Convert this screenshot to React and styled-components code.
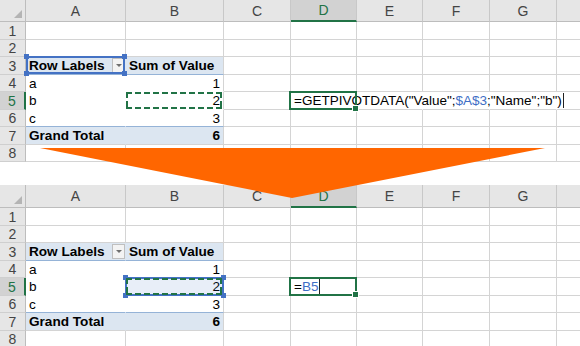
import React from 'react';
import styled, { createGlobalStyle } from 'styled-components';

const GlobalStyle = createGlobalStyle`
  html, body { margin: 0; padding: 0; background: #ffffff; }
  body {
    font-family: "Liberation Sans", Arial, sans-serif;
    width: 580px;
    height: 346px;
    overflow: hidden;
  }
`;

const GREEN = '#217346';
const REF_BLUE = '#4472c4';
const PIVOT_BG = '#dce6f1';
const PIVOT_LINE = '#95b3d7';
const GRID = '#d4d4d4';

const COLS = ['A', 'B', 'C', 'D', 'E', 'F', 'G', 'H'];
const ROWS = [1, 2, 3, 4, 5, 6, 7, 8];

const Page = styled.div`
  position: relative;
  width: 580px;
  height: 346px;
  overflow: hidden;
  display: flex;
  flex-direction: column;
  gap: 23px;
  background: #ffffff;
`;

const Sheet = styled.div`
  flex: none;
  width: 580px;
  height: ${(p) => p.$height}px;
  overflow: hidden;
  display: grid;
  grid-template-columns: 26px 100px 98px 67px 66px 66px 67px 67px 67px;
  grid-template-rows: ${(p) => p.$headerH}px 18px 17px 18px 17px 18px 17px 18px 17px;
`;

const ColHead = styled.div`
  box-sizing: border-box;
  display: flex;
  align-items: center;
  justify-content: center;
  font-size: 14px;
  color: ${(p) => (p.$sel ? GREEN : '#444444')};
  background: ${(p) => (p.$sel ? '#d2d2d2' : '#e6e6e6')};
  border-right: 1px solid #c8c8c8;
  border-bottom: ${(p) => (p.$sel ? `2px solid ${GREEN}` : '1px solid #bdbdbd')};
`;

const Corner = styled(ColHead)`
  align-items: flex-end;
  justify-content: flex-end;
  padding: 0 3px 3px 0;
  border-right: 1px solid #bdbdbd;
`;

const CornerTri = styled.div`
  width: 0;
  height: 0;
  border-left: 8px solid transparent;
  border-bottom: 8px solid #b4b4b4;
`;

const RowHead = styled.div`
  box-sizing: border-box;
  display: flex;
  align-items: center;
  justify-content: center;
  font-size: 14px;
  color: ${(p) => (p.$sel ? GREEN : '#444444')};
  background: ${(p) => (p.$sel ? '#d2d2d2' : '#e6e6e6')};
  border-right: ${(p) => (p.$sel ? `2px solid ${GREEN}` : '1px solid #bdbdbd')};
  border-bottom: 1px solid #cfcfcf;
`;

const Cell = styled.div`
  position: relative;
  box-sizing: border-box;
  display: flex;
  align-items: center;
  justify-content: ${(p) => (p.$right ? 'flex-end' : 'flex-start')};
  padding: 0 ${(p) => (p.$tight ? 0 : 3)}px 0 3px;
  font-size: 13.6px;
  font-weight: ${(p) => (p.$bold ? 700 : 400)};
  color: #000000;
  white-space: nowrap;
  background: ${(p) => p.$bg || 'transparent'};
  border-right: 1px solid ${(p) => p.$rc || GRID};
  border-bottom: 1px solid ${(p) => p.$bc || GRID};
`;

const Label = styled.span`
  flex: 1 0 auto;
`;

const DropBtn = styled.span`
  box-sizing: border-box;
  flex: none;
  width: 13px;
  height: 15px;
  display: flex;
  align-items: center;
  justify-content: center;
  background: #f3f3f3;
  border: 1px solid #bfbfbf;
`;

const DropArrow = styled.span`
  width: 0;
  height: 0;
  border-left: 3px solid transparent;
  border-right: 3px solid transparent;
  border-top: 3px solid #6f6f6f;
`;

const Typed = styled.span`
  position: relative;
  z-index: 6;
  flex: none;
  display: inline-flex;
  align-items: center;
  white-space: nowrap;
  font-size: 13.5px;
`;

const Ref = styled.span`
  color: #3f6fc6;
`;

const Caret = styled.span`
  display: inline-block;
  width: 1px;
  height: 15px;
  margin-left: 1px;
  background: #222222;
`;

const RangeBox = styled.div`
  position: absolute;
  inset: ${(p) => p.$inset};
  box-sizing: border-box;
  border: 2px solid ${REF_BLUE};
  background: ${(p) => (p.$fill ? 'rgba(68, 114, 196, 0.12)' : 'transparent')};
  pointer-events: none;
  z-index: 4;
`;

const Handle = styled.span`
  position: absolute;
  width: 5px;
  height: 5px;
  background: ${REF_BLUE};
  ${(p) => (p.$top ? 'top: -4px;' : 'bottom: -4px;')}
  ${(p) => (p.$left ? 'left: -4px;' : 'right: -4px;')}
`;

const dash = (dir) =>
  `repeating-linear-gradient(${dir}, ${GREEN} 0 6px, transparent 6px 9px)`;

const Ants = styled.div`
  position: absolute;
  inset: ${(p) => p.$inset};
  pointer-events: none;
  z-index: 5;
  background:
    ${dash('90deg')} top left / 100% 2px no-repeat,
    ${dash('90deg')} bottom left / 100% 2px no-repeat,
    ${dash('180deg')} top left / 2px 100% no-repeat,
    ${dash('180deg')} top right / 2px 100% no-repeat;
`;

const ActiveBox = styled.div`
  position: absolute;
  inset: -1px -1px -1px -2px;
  box-sizing: border-box;
  border: 2px solid ${GREEN};
  pointer-events: none;
  z-index: 7;
`;

const FillHandle = styled.span`
  position: absolute;
  right: -4px;
  bottom: -4px;
  width: 5px;
  height: 5px;
  background: ${GREEN};
  border: 1px solid #ffffff;
`;

const Arrow = styled.svg`
  position: absolute;
  left: 40px;
  top: 148px;
  z-index: 20;
  pointer-events: none;
`;

function Handles() {
  return (
    <>
      <Handle $top $left />
      <Handle $top />
      <Handle $left />
      <Handle />
    </>
  );
}

const pivotCells = {
  A3: {
    bold: true, bg: PIVOT_BG, rc: PIVOT_BG, bc: PIVOT_LINE, tight: true,
    content: (
      <>
        <Label>Row Labels</Label>
        <DropBtn><DropArrow /></DropBtn>
      </>
    ),
  },
  B3: { bold: true, bg: PIVOT_BG, bc: PIVOT_LINE, content: 'Sum of Value' },
  A4: { rc: '#ffffff', bc: '#ffffff', content: 'a' },
  B4: { right: true, bc: '#ffffff', content: '1' },
  A5: { rc: '#ffffff', bc: '#ffffff', content: 'b' },
  B5: { right: true, bc: '#ffffff', content: '2' },
  A6: { rc: '#ffffff', bc: PIVOT_LINE, content: 'c' },
  B6: { right: true, bc: PIVOT_LINE, content: '3' },
  A7: { bold: true, bg: PIVOT_BG, rc: PIVOT_BG, content: 'Grand Total' },
  B7: { bold: true, bg: PIVOT_BG, right: true, content: '6' },
};

const topCells = {
  ...pivotCells,
  A3: {
    ...pivotCells.A3,
    overlay: (
      <RangeBox $inset="-1px 0 0 0">
        <Handles />
      </RangeBox>
    ),
  },
  B5: { ...pivotCells.B5, overlay: <Ants $inset="0 1px 0 0" /> },
  D5: {
    content: (
      <Typed>
        =GETPIVOTDATA("Value";<Ref>$A$3</Ref>;"Name";"b")
        <Caret />
      </Typed>
    ),
    overlay: (
      <ActiveBox>
        <FillHandle />
      </ActiveBox>
    ),
  },
  E5: { rc: 'transparent' },
  F5: { rc: 'transparent' },
  G5: { rc: 'transparent' },
};

const bottomCells = {
  ...pivotCells,
  B5: {
    ...pivotCells.B5,
    overlay: (
      <>
        <RangeBox $inset="-1px -1px -1px -1px" $fill>
          <Handles />
        </RangeBox>
        <Ants $inset="0 1px 0 0" />
      </>
    ),
  },
  D5: {
    content: (
      <Typed>
        =<Ref>B5</Ref>
        <Caret />
      </Typed>
    ),
    overlay: (
      <ActiveBox>
        <FillHandle />
      </ActiveBox>
    ),
  },
};

function Spreadsheet({ headerH, height, cells }) {
  return (
    <Sheet $headerH={headerH} $height={height}>
      <Corner>
        <CornerTri />
      </Corner>
      {COLS.map((c) => (
        <ColHead key={c} $sel={c === 'D'}>
          {c === 'H' ? null : c}
        </ColHead>
      ))}
      {ROWS.map((r) => (
        <React.Fragment key={r}>
          <RowHead $sel={r === 5}>{r}</RowHead>
          {COLS.map((c) => {
            const s = cells[c + r] || {};
            return (
              <Cell
                key={c + r}
                $bold={s.bold}
                $bg={s.bg}
                $rc={s.rc}
                $bc={s.bc}
                $right={s.right}
                $tight={s.tight}
              >
                {s.content}
                {s.overlay}
              </Cell>
            );
          })}
        </React.Fragment>
      ))}
    </Sheet>
  );
}

export default function App() {
  return (
    <>
      <GlobalStyle />
      <Page>
        <Spreadsheet headerH={22} height={162} cells={topCells} />
        <Spreadsheet headerH={23} height={161} cells={bottomCells} />
        <Arrow width="505" height="50" viewBox="0 0 505 50">
          <polygon points="0,0 505,0 252,50" fill="#ff6600" />
        </Arrow>
      </Page>
    </>
  );
}
